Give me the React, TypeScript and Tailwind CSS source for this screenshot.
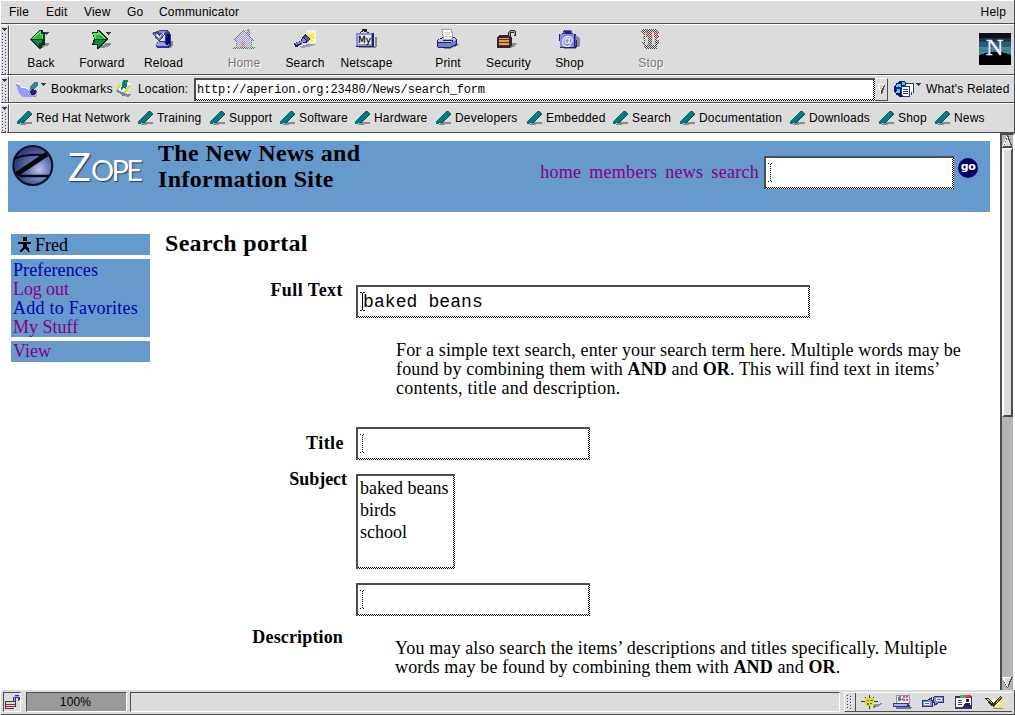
import React from "react";

const SANS = "font-['Liberation_Sans',sans-serif] text-[12px] leading-[14px] tracking-[0.18px] whitespace-nowrap";

function Svg({ w, h, className = "", children }: { w: number; h: number; className?: string; children: React.ReactNode }) {
  return (
    <svg width={w} height={h} viewBox={`0 0 ${w} ${h}`} shapeRendering="crispEdges" className={`block shrink-0 ${className}`}>
      {children}
    </svg>
  );
}

function GripDots({ h, className = "" }: { h: number; className?: string }) {
  const rows = Array.from({ length: Math.floor(h / 3) }, (_, i) => i * 3);
  return (
    <Svg w={6} h={h} className={className}>
      {rows.map((y) => (
        <React.Fragment key={y}>
          <path d={`M1 ${y + 1}h1v1h-1zM4 ${y + 2}h1v1h-1z`} fill="#ffffff" />
          <path d={`M0 ${y}h1v1h-1zM3 ${y + 1}h1v1h-1z`} fill="#333377" />
        </React.Fragment>
      ))}
    </Svg>
  );
}

function Grip({ h }: { h: number }) {
  return (
    <div className="flex w-[8px] shrink-0 flex-col items-center border-r border-r-[#4d4d4d] border-t border-t-white pt-[2px]">
      <Svg w={5} h={4}><path d="M0 0h5v1h-1v1h-1v1h-1v-1h-1v-1h-1z" fill="#333366" /></Svg>
      <GripDots h={h} className="mt-[1px]" />
    </div>
  );
}

function Field({ className = "", children }: { className?: string; children?: React.ReactNode }) {
  return (
    <div className={`shrink-0 border-l-2 border-t-2 border-[#4d4d4d] bg-[repeating-conic-gradient(#000_0_25%,#fff_0_50%)] bg-[length:2px_2px] pb-[2px] pr-[2px] ${className}`}>
      <div className="flex h-full w-full bg-white">{children}</div>
    </div>
  );
}

function Caret({ solid = false }: { solid?: boolean }) {
  return (
    <Svg w={5} h={19} className="ml-[2px] mt-[5px]">
      <path d="M0 .5H2M3 .5H5M2.5 1V18M0 18.5H2M3 18.5H5" stroke="#000" strokeDasharray={solid ? undefined : "1 1"} />
    </Svg>
  );
}

const shadow = "#8a8a8a";

const icons: Record<string, React.ReactNode> = {
  Back: (<><path d="M12 14h7v2l-3 1-4 2H8z" fill={shadow} /><path d="M0 10L9 1h4v2h2v13h-2l-2 4H9z" fill="#00331a" /><path d="M1 10l8-8h2v3h2v5z" fill="#55e655" /><path d="M3 10l7-6v2h2v4z" fill="#22bb44" /><path d="M2 11h10v3H9v4z" fill="#118844" /><path d="M14 3h5v1h-1v1h-1v1h-1V5h-1V4h-1z" fill="#333366" /></>),
  Forward: (<><path d="M9 18l6-4h5v2l-4 2-4 1H7z" fill={shadow} /><path d="M1 3h5V1h3l8 9-9 10H6v-4H1l2-6z" fill="#00331a" /><path d="M2 4h5V2h1l7 8H4z" fill="#55e655" /><path d="M5 6h4l4 4H5z" fill="#22bb44" /><path d="M4 11h11l-8 7v-3H3z" fill="#118844" /><path d="M15 3h5v1h-1v1h-1v1h-1V5h-1V4h-1z" fill="#333366" /></>),
  Reload: (<><path d="M9 19l8-3v-4h4v4l-3 3z" fill={shadow} /><path d="M4 14l4-2h5V3l4 1 2 2v11l-3 2H5l-1-2z" fill="#33338a" /><path d="M4 14l4-1h4l1 2h4l-2 2H5z" fill="#9a9aee" /><path d="M14 4l4 2v9l-4 1z" fill="#000077" /><path d="M5 2l3-1h8l2 3-5 1-4 6-3 1-6-8z" fill="#44447f" /><path d="M5 3l3-1h7l-4 3z" fill="#8888dd" /><path d="M1 4l4 1 3 2 3-4 1 2-5 6z" fill="#d5d5f5" /><path d="M0 4h2l5 7 4-6" fill="none" stroke="#7777aa" /></>),
  Home: (<><path d="M0 11L9 1h2l3 3V0h3v6l4 6h-2v7H3v-7z" fill="#66669a" /><path d="M2 11l8-8 8 8v8H4v-7z" fill="#a5a5e0" /><path d="M8 12h4v7H8z" fill="#bb6677" /><path d="M0 18h22v2H0z" fill="#338855" /><path d="M4 18h3v2H4zM15 18h3v2h-3z" fill="#aa7733" /></>),
  Search: (<><path d="M10 4l3-3h9v13l-5 1z" fill="#f4f4e8" /><path d="M13 4l3 2 5-3-2 4 3 2-4 1 2 4-4-2-2-3z" fill="#ffee22" /><path d="M4 18l10-3h8l-4 2-9 2z" fill="#9a9abb" /><path d="M0 14l7-2 1-4 4-3 4 5-3 4-4 0-6 4H1z" fill="#222266" /><path d="M1 14l7-2 1-3 4 3-3 1-8 3z" fill="#8888dd" /><path d="M10 8l2-2 3 4-2 2z" fill="#5555aa" /></>),
  Netscape: (<><path d="M4 19h17l1-2V8h-2v9H4z" fill={shadow} /><path d="M1 4h17l1 1v13H1z" fill="#222266" /><path d="M1 4h16v13H1z" fill="#8888ee" /><path d="M3 6h13v9H3z" fill="#f2f2f2" /><path d="M5 4l4-3 5 3M7 0h4v2H9" fill="none" stroke="#222" /><text x="3" y="14" fontSize="9" fontFamily="DejaVu Sans" fill="#111" stroke="#111" strokeWidth=".3">My</text></>),
  Print: (<><path d="M9 18l8-3h5l-2 2-7 3H6z" fill={shadow} /><path d="M0 11l6-3h12l2 3v5l-7 3H1l-1-2z" fill="#222266" /><path d="M1 11l5-2h12l1 2-5 2H1z" fill="#c0c0f8" /><path d="M1 14h12l6-3v4l-6 3H1z" fill="#7777cc" /><path d="M5 .5h9l1 3v7H7z" fill="#fff" stroke="#a5a5a5" /><path d="M8 3.500h5M8 5.500h5M8 7.500h6" stroke="#ccc" /><path d="M6 11.500h10" stroke="#222266" /><path d="M10 15h3v1h-3z" fill="#33dd33" /></>),
  Security: (<><path d="M14 14h6l-2 3-4 2H6v-2h8z" fill={shadow} /><path d="M0 8l2-2h9V3l2-2h4l2 2v4h-2V4h-3v4h1v8l-2 3H0z" fill="#332233" /><path d="M2 9h10v8H2z" fill="#ccaa44" /><path d="M2 10.500h10M2 13.500h10M2 16.500h10" stroke="#882222" /><path d="M12 7V4l2-2h3l1 4" fill="none" stroke="#ccaa33" /></>),
  Shop: (<><path d="M5 20h12l5-3V9l-3-2z" fill={shadow} /><path d="M1 5h3l2-4h7l2 4h3l1 12-2 2H2z" fill="#222277" /><path d="M2 5h14v13H2z" fill="#8888ee" /><path d="M17 6h1v10l-1 2z" fill="#5555aa" /><path d="M5 5l3-4h4l2 4" fill="none" stroke="#5555aa" /><text x="3.500" y="15.500" fontSize="12" fontFamily="Liberation Sans" fontWeight="bold" fill="#fff">@</text></>),
  Stop: (<><path d="M3 0h13l3 3-2 3h2v2l-2 3h2v2l-2 4v3H5l-1-3-3-4h3v-3L1 8h3V6L1 3V1z" fill="#444" /><path d="M5 3h3v13H5zM12 3h3v13h-3z" fill="#ccc" /><path d="M6 3h3v5H6zM14 3h3v5h-3z" fill="#dd1111" /></>),
};

function Dither() {
  const cells: string[] = [];
  for (let y = 0; y < 21; y++) for (let x = y % 2; x < 23; x += 2) cells.push(`M${x} ${y}h1v1h-1z`);
  return <path d={cells.join("")} fill="#dcdcdc" />;
}

function Tool({ name, className, off = false }: { name: string; className: string; off?: boolean }) {
  return (
    <div className={`flex shrink-0 flex-col items-center ${className}`}>
      <Svg w={23} h={21}>{icons[name]}{off && <Dither />}</Svg>
      <span className={`mt-[6px] ${SANS} ${off ? "text-[#777777] [text-shadow:1px_1px_0_#fff]" : "text-black"}`}>{name}</span>
    </div>
  );
}

function BookmarkIcon() {
  return (
    <Svg w={16} h={16}>
      <path d="M7 12h8v2H10l-3 1H2z" fill="#8a8a8a" />
      <path d="M0 12L10 1h2l3 2v1l-9 9H4l-3 1H0z" fill="#007c7c" />
      <path d="M6 12l9-9v1l-9 9H4z" fill="#004c4c" />
    </Svg>
  );
}

function PersonalLink({ name, className }: { name: string; className: string }) {
  return (
    <div className={`flex shrink-0 items-center gap-[3px] ${className}`}>
      <BookmarkIcon />
      <span className={SANS}>{name}</span>
    </div>
  );
}

const panelRow = "flex w-full border-t border-t-white border-b border-b-[#4d4d4d] bg-[#dcdcdc]";
const blockText = "text-[18px] leading-[19px] whitespace-nowrap";

function FormRow({ label, className, labelClass, children }: { label: string; className: string; labelClass: string; children: React.ReactNode }) {
  return (
    <div className={`flex items-start ${className}`}>
      <div className={`shrink-0 text-right font-bold ${blockText} ${labelClass}`}>{label}</div>
      {children}
    </div>
  );
}

export default function App() {
  return (
    <div className="flex h-[715px] w-[1015px] flex-col overflow-hidden border-l border-l-white bg-[#dcdcdc] text-black">
      <div className="flex h-[133px] shrink-0 flex-col border-r border-r-[#4d4d4d]">
        <div className={`${panelRow} h-[24px] items-center pl-[8px] pr-[8px] ${SANS}`}>
          <span className="w-[37px]">File</span>
          <span className="w-[38px]">Edit</span>
          <span className="w-[43px]">View</span>
          <span className="w-[32px]">Go</span>
          <span>Communicator</span>
          <span className="ml-auto">Help</span>
        </div>

        <div className={`${panelRow} h-[51px]`}>
          <Grip h={42} />
          <div className="flex flex-1 border-l border-l-white pl-[1px] pt-[4px]">
            <Tool name="Back" className="w-[60px]" />
            <Tool name="Forward" className="w-[62px]" />
            <Tool name="Reload" className="w-[61px]" />
            <Tool name="Home" className="ml-[19px] w-[62px]" off />
            <Tool name="Search" className="w-[60px]" />
            <Tool name="Netscape" className="w-[63px]" />
            <Tool name="Print" className="ml-[19px] w-[62px]" />
            <Tool name="Security" className="w-[59px]" />
            <Tool name="Shop" className="w-[63px]" />
            <Tool name="Stop" className="ml-[19px] w-[62px]" off />
            <Svg w={32} h={32} className="ml-auto mr-[3px] mt-[4px]">
              <path d="M0 0h32v32H0z" fill="#0c1014" />
              <path d="M0 5h32v4H0z" fill="#1d3442" />
              <path d="M0 9h32v5H0z" fill="#285f73" />
              <path d="M0 14h32v8H0z" fill="#3a8c9c" />
              <path d="M0 8.500h32M0 13.500h32M0 17.500h32" stroke="#554488" strokeDasharray="1 2" />
              <path d="M0 22l6-2 7-1h7l7 1 5 2v10H0z" fill="#000" />
              <text x="7" y="22" fontSize="24" fontFamily="Liberation Serif" fill="#fff" stroke="#7777dd" strokeWidth="1" paintOrder="stroke">N</text>
            </Svg>
          </div>
        </div>

        <div className={`${panelRow} h-[28px]`}>
          <Grip h={18} />
          <div className="flex flex-1 items-center border-l border-l-white">
            <Svg w={31} h={20} className="ml-[6px]">
              <path d="M5 17h13l4-1-3 2H9z" fill="#8a8a8a" />
              <path d="M0 5l3 1 3 3 3-1 4 2 2 2 5-2 1 4-4 4H6l-3-3z" fill="#9a9aff" />
              <path d="M0 4.500h3l3 4h3l4 2" fill="none" stroke="#fff" />
              <path d="M14 7l5-4h3v3l-6 6-2-1z" fill="#338a8a" />
              <path d="M14 12l3-2 4 2-2 4h-4z" fill="#222266" />
              <path d="M25 4h5v1h-1v1h-1v1h-1V6h-1V5h-1z" fill="#333366" />
            </Svg>
            <span className={`ml-[4px] w-[63px] ${SANS}`}>Bookmarks</span>
            <Svg w={18} h={18} className="ml-[1px]">
              <path d="M5 14h11l-2 3-6-1z" fill="#8a8a8a" />
              <path d="M1 10l5-7h8l2 2-6 10z" fill="#fff" />
              <path d="M2 10l4-6M9 14l6-9" stroke="#dddd22" strokeWidth="2" />
              <path d="M0 11l3-1 7 3v3z" fill="#7777cc" />
              <path d="M8 0h5l-2 10-2-2-3 2z" fill="#008080" />
            </Svg>
            <span className={`ml-[5px] w-[56px] ${SANS}`}>Location:</span>
            <Field className="h-[23px] w-[681px]">
              <span className="ml-[1px] mt-[3px] h-[15px] whitespace-nowrap font-['Liberation_Mono',monospace] text-[12px] leading-[15px] tracking-[-0.18px]">http://aperion.org:23480/News/search_form</span>
            </Field>
            <div className="flex h-[23px] w-[13px] items-center justify-center border-b border-r border-[#4d4d4d] border-t border-t-white">
              <Svg w={8} h={10}><path d="M0 0h8L4 10z" fill="#fff" /><path d="M8 0v2L5 10H4V7l3-6z" fill="#4d4d4d" /><path d="M2 1h4L4 6z" fill="#c8c8c8" /></Svg>
            </div>
            <Svg w={27} h={17} className="ml-[6px]">
              <circle cx="8" cy="8" r="8" fill="#111177" />
              <path d="M3 3h4v3H2zM8 1h3v3H8zM3 8h3v4H2z" fill="#33dddd" />
              <path d="M11.500 2.500h8v9M9.500 4.500h8v9" fill="none" stroke="#333377" />
              <path d="M12 3h7v8h-7zM10 5h7v8h-7z" fill="#fff" />
              <path d="M7.500 5.500h8v10h-6l-2-2z" fill="#fff" stroke="#333377" />
              <path d="M9 8.500h5M9 10.500h5M9 12.500h5" stroke="#333377" />
              <path d="M22 2h5v1h-1v1h-1v1h-1V4h-1V3h-1z" fill="#333366" />
            </Svg>
            <span className={`ml-[5px] ${SANS}`}>What's Related</span>
          </div>
        </div>

        <div className={`${panelRow} h-[30px]`}>
          <Grip h={21} />
          <div className="flex flex-1 items-center border-l border-l-white pl-[7px]">
            <PersonalLink name="Red Hat Network" className="w-[121px]" />
            <PersonalLink name="Training" className="w-[72px]" />
            <PersonalLink name="Support" className="w-[70px]" />
            <PersonalLink name="Software" className="w-[75px]" />
            <PersonalLink name="Hardware" className="w-[81px]" />
            <PersonalLink name="Developers" className="w-[91px]" />
            <PersonalLink name="Embedded" className="w-[86px]" />
            <PersonalLink name="Search" className="w-[67px]" />
            <PersonalLink name="Documentation" className="w-[110px]" />
            <PersonalLink name="Downloads" className="w-[89px]" />
            <PersonalLink name="Shop" className="w-[56px]" />
            <PersonalLink name="News" className="w-[60px]" />
          </div>
        </div>
      </div>

      <div className="flex h-[557px] shrink-0">
        <div className="h-full w-[999px] overflow-hidden bg-white pl-[7px] pt-[8px] font-['Liberation_Serif',serif]">
          <div className="flex h-[71px] w-[982px] bg-[#6699cc]">
            <Svg w={42} h={42} className="ml-[4px] mt-[4px] [shape-rendering:auto]">
              <defs>
                <radialGradient id="orb" cx="0.66" cy="0.6" r="0.6">
                  <stop offset="0" stopColor="#b9c4ea" /><stop offset="0.5" stopColor="#6072b0" /><stop offset="1" stopColor="#2f3f7c" />
                </radialGradient>
              </defs>
              <circle cx="20.800" cy="20.500" r="19.500" fill="url(#orb)" stroke="#0a0f22" strokeWidth="2" />
              <path d="M2 14Q12 9 31 10" fill="none" stroke="#05070f" strokeWidth="2" />
              <path d="M35 9L5 29" fill="none" stroke="#05070f" strokeWidth="5" />
              <path d="M4 28l5 3h28" fill="none" stroke="#05070f" strokeWidth="2.500" />
            </Svg>
            <div className="ml-[14px] mt-[2px] flex w-[90px] items-baseline font-['Lato',sans-serif] leading-[46px] text-white [text-shadow:1px_1px_1px_#223a66]">
              <span className="text-[38px]">Z</span><span className="text-[29px] tracking-[-2.6px]">OPE</span>
            </div>
            <div className="mt-[-1px] whitespace-nowrap text-[24px] font-bold leading-[26px] tracking-[0.36px]">
              <div>The New News and</div>
              <div>Information Site</div>
            </div>
            <div className="ml-auto flex pr-[12px]">
              <div className="mt-[21px] flex gap-[8px] text-[18px] leading-[20px] tracking-[0.28px] text-[#880088]">
                <a>home</a><a>members</a><a>news</a><a>search</a>
              </div>
              <Field className="ml-[5px] mt-[15px] h-[33px] w-[190px]"><Caret /></Field>
              <div className="ml-[4px] mt-[17px] flex h-[20px] w-[20px] justify-center rounded-full bg-[#000066] font-['DejaVu_Sans',sans-serif] text-[11px] font-bold leading-[18px] tracking-[-0.5px] text-white">go</div>
            </div>
          </div>

          <div className="flex pl-[3px] pt-[22px]">
            <div className={`flex w-[139px] shrink-0 flex-col gap-[4px] text-[#880088] ${blockText}`}>
              <div className="flex h-[21px] items-center bg-[#6699cc] pl-[7px] pt-[1px] text-black">
                <Svg w={13} h={15} className="mr-[4px] mt-[-1px]">
                  <path d="M5 0h4v4H5zM0 5h13v2H9v3l2 2 1 3h-2l-3-4-3 4H2l1-3 2-2V7H0z" fill="#000" />
                </Svg>
                Fred
              </div>
              <div className="h-[78px] bg-[#6699cc] pl-[2px] pt-[2px]">
                <div className="tracking-[0.1px] text-[#0000aa]">Preferences</div>
                <div className="tracking-[-0.1px]">Log out</div>
                <div className="tracking-[0.25px] text-[#0000aa]">Add to Favorites</div>
                <div>My Stuff</div>
              </div>
              <div className="h-[21px] bg-[#6699cc] pl-[2px] pt-[1px]">View</div>
            </div>

            <div className="ml-[15px] w-[820px]">
              <h1 className="mt-[-4px] text-[24px] font-bold leading-[26px] tracking-[0.3px]">Search portal</h1>
              <FormRow label="Full Text" className="mt-[29px]" labelClass="mt-[-4px] w-[178px] tracking-[0.45px]">
                <Field className="ml-[13px] h-[33px] w-[454px]">
                  <Caret solid />
                  <span className="ml-[-2px] mt-[5px] font-['Liberation_Mono',monospace] text-[18px] leading-[20px] tracking-[0.1px]">baked beans</span>
                </Field>
              </FormRow>
              <div className={`ml-[231px] mt-[23px] tracking-[0.14px] ${blockText}`}>
                For a simple text search, enter your search term here. Multiple words may be<br />
                found by combining them with <b>AND</b> and <b>OR</b>. This will find text in items’<br />
                <span className="tracking-[0.25px]">contents, title and description.</span>
              </div>
              <FormRow label="Title" className="mt-[29px]" labelClass="mt-[7px] w-[179px] tracking-[0.45px]">
                <Field className="ml-[12px] h-[33px] w-[234px]"><Caret /></Field>
              </FormRow>
              <FormRow label="Subject" className="mt-[14px]" labelClass="mt-[-4px] w-[182px] tracking-[-0.05px]">
                <div className="ml-[9px]">
                  <Field className="h-[95px] w-[99px]">
                    <div className="whitespace-nowrap pl-[2px] pt-[1px] text-[18px] leading-[22px]">
                      <div>baked beans</div><div>birds</div><div>school</div>
                    </div>
                  </Field>
                  <Field className="mt-[14px] h-[33px] w-[234px]"><Caret /></Field>
                </div>
              </FormRow>
              <FormRow label="Description" className="mt-[12px]" labelClass="w-[178px] tracking-[0.15px]">
                <div className={`ml-[52px] mt-[11px] tracking-[0.13px] ${blockText}`}>
                  You may also search the items’ descriptions and titles specifically. Multiple<br />
                  words may be found by combining them with <b>AND</b> and <b>OR</b>.
                </div>
              </FormRow>
            </div>
          </div>
        </div>

        <div className="flex w-[15px] flex-col border-l-2 border-t-2 border-[#4d4d4d] border-r-2 border-r-white bg-[#b4b4b4]">
          <Svg w={11} h={13}><path d="M0 13L5 0h1l5 13z" fill="#4d4d4d" /><path d="M0 12L5 0v2L2 11z" fill="#fff" /><path d="M2 11l3.500-9L9 11z" fill="#dcdcdc" /></Svg>
          <div className="h-[269px] border-b-2 border-r-2 border-b-[#4d4d4d] border-r-[#4d4d4d] border-l-2 border-l-white border-t-2 border-t-white bg-[#dcdcdc]" />
          <Svg w={11} h={13} className="mb-[1px] mt-auto"><path d="M0 1h11L6 12H5z" fill="#4d4d4d" /><path d="M0 1h10L8 2H2l4 9H5z" fill="#fff" /><path d="M2 2h7l-3.500 8z" fill="#dcdcdc" /></Svg>
        </div>
      </div>

      <div className="flex h-[25px] items-start border-b border-b-[#4d4d4d] border-r border-r-[#4d4d4d] pl-[2px] pt-[2px]">
        <div className="flex h-[20px] w-[18px] shrink-0 items-center justify-center border border-b-white border-l-[#4d4d4d] border-r-white border-t-[#4d4d4d]">
          <Svg w={15} h={14}><path d="M0 6h8V2l2-2h4l1 4-2 2V3h-2v9l-3 2H0z" fill="#333388" /><path d="M1 7h9v6H1z" fill="#eedd99" /><path d="M1 9.500h9M1 11.500h9" stroke="#992266" /><path d="M9 6V3l1-2h4" fill="none" stroke="#9999ff" /></Svg>
        </div>
        <div className={`ml-[5px] flex h-[20px] w-[101px] shrink-0 items-center justify-center border border-b-white border-l-[#4d4d4d] border-r-white border-t-[#4d4d4d] bg-[#999999] pr-[2px] ${SANS}`}>100%</div>
        <div className="ml-[3px] h-[20px] w-[710px] shrink-0 border border-b-white border-l-[#4d4d4d] border-r-white border-t-[#4d4d4d]" />
        <div className="ml-[4px] mr-[2px] flex h-[20px] flex-1 items-center border-b border-l border-t border-b-[#4d4d4d] border-l-white border-t-white">
          <GripDots h={15} className="mx-[2px]" />
          <div className="h-full border-l border-l-[#4d4d4d]" />
          <div className="ml-[5px] flex items-center gap-[11px]">
            <Svg w={21} h={14}><path d="M12 9h4l5-1-3 3-6 2z" fill="#8888bb" /><path d="M0 6.500h17M8.500 0v14M3 1l11 11M14 1L3 12" stroke="#33336a" strokeWidth="1.300" /><path d="M4 3h9v8H4z" fill="#dddd33" /><path d="M6 5h2v1H6zM9 5h3v1H9zM6 8h2v2H6zM9 8h2v1H9z" fill="#666644" /><path d="M1 5h2v1H1zM2 1h2v2H2zM13 1h2v2h-2zM2 11h2v1H2z" fill="#eeee44" /></Svg>
            <Svg w={19} h={14}><path d="M3 12h16l-1 2H3z" fill="#777" /><path d="M3 0h13v8H3z" fill="#eef" stroke="#8888cc" /><path d="M7 1l3 5M11 1v6M14 1v6" stroke="#ee4444" strokeWidth="2" strokeDasharray="2 1" /><path d="M5 2h3v4H5z" fill="#339966" /><path d="M0 8h16l1 4H0z" fill="#3333aa" /><path d="M1 9h13v2H1z" fill="#aaaaff" /></Svg>
            <Svg w={24} h={14} className="ml-[-2px]"><path d="M13.500 1.500h9v6h-5l-4 3v-3h-1v-5z" fill="#8a8ae6" stroke="#33337a" /><path d="M1.500 5.500h5l4-3v3h1v6h-10z" fill="#8a8ae6" stroke="#33337a" /><path d="M3 7h6v3H3zM15 3h6v3h-6z" fill="#ccffff" /><path d="M4 8.500h4M16 4.500h4" stroke="#228888" /></Svg>
            <Svg w={17} h={14} className="ml-[-1px]"><path d="M0 1h17v13H0z" fill="#333377" /><path d="M1 3h15v9H1z" fill="#fff" /><path d="M5 0h5v3H5z" fill="#33bb55" /><path d="M10 0h6v3h-6z" fill="#ee3333" /><path d="M3 5.500h4M3 7.500h4M3 9.500h4" stroke="#333377" /><path d="M11 4h3v3h-3zM8 12l2-4h5l1 4z" fill="#222255" /></Svg>
            <Svg w={20} h={14} className="ml-[2px]"><path d="M8 13h9l1-1v2H8z" fill="#888" /><path d="M4 5l7-2 8 4-5 6-7-1z" fill="#ffee44" /><path d="M5 6l5-3 5 6-5 3z" fill="#fff" /><path d="M0 3h4l4 5 7-7h2v2l-8 9-3-1z" fill="#333322" /><path d="M13 4l4-3-7 9zM1 4h3l3 4z" fill="#cccc33" /></Svg>
          </div>
        </div>
      </div>
    </div>
  );
}
